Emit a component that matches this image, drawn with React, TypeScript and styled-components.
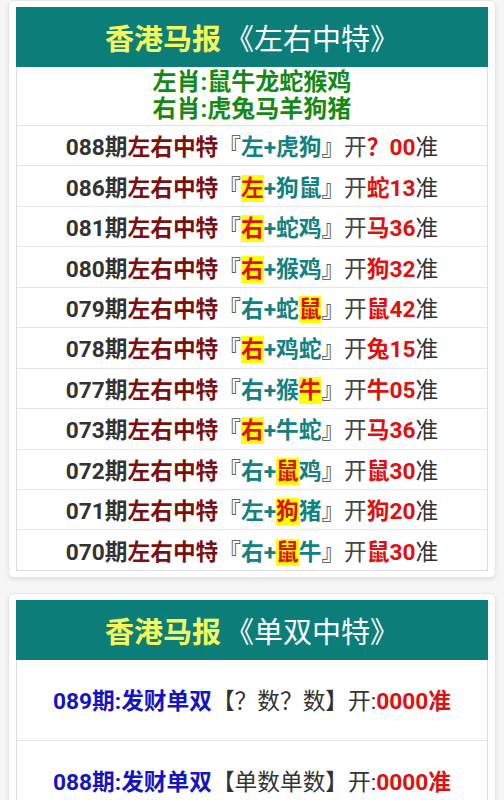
import React from 'react';
import styled, { createGlobalStyle } from 'styled-components';

const GlobalStyle = createGlobalStyle`
  html, body {
    margin: 0;
    padding: 0;
    background: #f6f6f6;
  }
  body {
    font-family: Roboto, "Noto Sans CJK SC", sans-serif;
  }
`;

const Page = styled.div`
  display: flex;
  flex-direction: column;
  gap: 15px;
  padding: 0 8px;
`;

const Card = styled.div`
  background: #fff;
  border: 1px solid #e6e6e6;
  border-radius: 6px;
  padding: 6px 7px;
  box-shadow: 0 2px 4px rgba(0, 0, 0, 0.08);
`;

const Table = styled.div`
  border: 1px solid #dddddd;
  border-top: none;
  display: flex;
  flex-direction: column;
`;

const Header = styled.div`
  height: 60px;
  background: #0b7e7a;
  display: flex;
  align-items: center;
  justify-content: center;
  font-size: 29px;
  color: #fff;
  margin: 0 -1px;

  b {
    color: #f7f75c;
    font-weight: 700;
    margin-right: 4px;
  }
`;

const Zodiac = styled.div`
  height: 58px;
  display: flex;
  flex-direction: column;
  align-items: center;
  justify-content: center;
  color: #148a14;
  font-size: 24px;
  font-weight: 700;
  line-height: 27px;
`;

const Row = styled.div<{ $h: number }>`
  height: ${({ $h }) => $h}px;
  box-sizing: border-box;
  border-top: 1px solid #e6e6e6;
  display: flex;
  align-items: center;
  justify-content: center;
  font-size: 22.7px;
  color: #333;
  white-space: nowrap;
`;

const Issue = styled.span`
  font-weight: 700;
  color: #333;
`;

const Title = styled.span`
  font-weight: 700;
  color: #7e0f0f;
`;

const Bracket = styled.span`
  color: #444;
`;

const Pick = styled.span`
  font-weight: 700;
  color: #118181;
`;

const Hit = styled.span`
  background: #ffff00;
  color: #e0100e;
`;

const Result = styled.span`
  font-weight: 700;
  color: #e0100e;
`;

const Blue = styled.span`
  font-weight: 700;
  color: #1414c0;
`;

type Item = { n: string; pick: string; hl: number; open: string };

const items: Item[] = [
  { n: '088', pick: '左虎狗', hl: -1, open: '？00' },
  { n: '086', pick: '左狗鼠', hl: 0, open: '蛇13' },
  { n: '081', pick: '右蛇鸡', hl: 0, open: '马36' },
  { n: '080', pick: '右猴鸡', hl: 0, open: '狗32' },
  { n: '079', pick: '右蛇鼠', hl: 2, open: '鼠42' },
  { n: '078', pick: '右鸡蛇', hl: 0, open: '兔15' },
  { n: '077', pick: '右猴牛', hl: 2, open: '牛05' },
  { n: '073', pick: '右牛蛇', hl: 0, open: '马36' },
  { n: '072', pick: '右鼠鸡', hl: 1, open: '鼠30' },
  { n: '071', pick: '左狗猪', hl: 1, open: '狗20' },
  { n: '070', pick: '右鼠牛', hl: 1, open: '鼠30' },
];

const PickChar = ({ c, on }: { c: string; on: boolean }) => (on ? <Hit>{c}</Hit> : <>{c}</>);

const LeftRightRow = ({ n, pick, hl, open }: Item) => (
  <Row $h={40.45}>
    <Issue>{n}期</Issue>
    <Title>左右中特</Title>
    <Bracket>『</Bracket>
    <Pick>
      <PickChar c={pick[0]} on={hl === 0} />+<PickChar c={pick[1]} on={hl === 1} />
      <PickChar c={pick[2]} on={hl === 2} />
    </Pick>
    <Bracket>』开</Bracket>
    <Result>{open}</Result>
    准
  </Row>
);

const oddEven = [
  { n: '089', guess: '【？数？数】' },
  { n: '088', guess: '【单数单数】' },
];

const App = () => (
  <>
    <GlobalStyle />
    <Page>
      <Card>
        <Table>
          <Header>
            <b>香港马报</b>《左右中特》
          </Header>
          <Zodiac>
            <div>左肖:鼠牛龙蛇猴鸡</div>
            <div>右肖:虎兔马羊狗猪</div>
          </Zodiac>
          {items.map((it) => (
            <LeftRightRow key={it.n} {...it} />
          ))}
        </Table>
      </Card>
      <Card>
        <Table>
          <Header>
            <b>香港马报</b>《单双中特》
          </Header>
          {oddEven.map((r, i) => (
            <Row key={r.n} $h={80} style={i === 0 ? { borderTop: 'none' } : undefined}>
              <Blue>{r.n}期:发财单双</Blue>
              {r.guess}开:
              <Result>0000准</Result>
            </Row>
          ))}
        </Table>
      </Card>
    </Page>
  </>
);

export default App;
